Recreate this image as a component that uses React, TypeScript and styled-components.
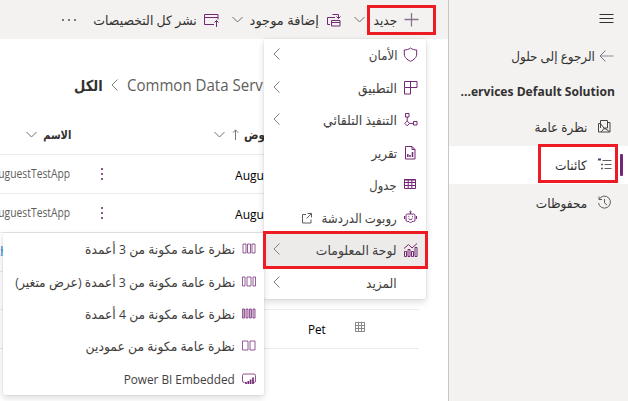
import React from "react";
import styled, { createGlobalStyle } from "styled-components";

const Global = createGlobalStyle`
  *, *::before, *::after { box-sizing: border-box; }
  body { margin: 0; }
`;

const ACCENT = "#742774";

const Page = styled.div`
  position: relative;
  display: flex;
  direction: rtl;
  width: 628px;
  height: 401px;
  overflow: hidden;
  background: #fff;
  color: #323130;
  font: 13px/20px "Open Sans", "DejaVu Sans", sans-serif;
`;

const Text = styled.span<{
  $scale?: number; $size?: number; $weight?: number; $color?: string; $up?: number; $ltr?: boolean; $origin?: string;
}>`
  display: block;
  flex: none;
  white-space: nowrap;
  direction: ${(p) => (p.$ltr ? "ltr" : "rtl")};
  font-size: ${(p) => p.$size ?? 13}px;
  font-weight: ${(p) => p.$weight ?? 400};
  color: ${(p) => p.$color ?? "inherit"};
  transform: translateY(${(p) => -(p.$up ?? 0)}px) scaleX(${(p) => p.$scale ?? 1});
  transform-origin: ${(p) => p.$origin ?? (p.$ltr ? "left" : "right")} center;
`;

const Svg = styled.svg<{ $color?: string }>`
  display: block;
  flex: none;
  fill: none;
  stroke: ${(p) => p.$color ?? ACCENT};
  stroke-width: 1;
  overflow: visible;
`;

/* ---------- icons ---------- */

const paths: Record<string, React.ReactNode> = {
  plus: <path d="M7.500 1v13.500M.5 7.500h14" stroke="#8a7392" strokeWidth="1.300" />,
  existing: <path d="M4 12.500H1.500v-7H9M5.500 8.500h8.500v5.500H5.500zM5.500 10.500H14M6.500 2.500h6v4M10.500 4.500l2 2 2-2" />,
  publish: <path d="M10 12.500H.5v-10h13.500v5M.5 5.500H14M12.500 15V8.500M10.500 10.500l2-2 2 2" />,
  shield: <path d="M7.500 1C5.800 2.300 3.600 3 1.300 3v4c0 3.400 2.600 5.700 6.200 7.300 3.600-1.600 6.200-3.900 6.200-7.300V3C11.400 3 9.200 2.300 7.500 1z" />,
  app: <path d="M1.500 1.500h12.500v6H1.500zM7.500 1.500v12.500h-6V7.500" />,
  flow: <path d="M2.500 1.500H6V5H2.500zM4.200 5v4M4.200 9l2.400 2.400-2.400 2.400-2.400-2.400zM6.600 11.400H10M10.500 9.500H14v3.500h-3.500z" />,
  report: <><path d="M2.500 1.500H9l3 3V14H2.500zM9 1.500v3h3" /><path d="M4.800 12V9M7 12v-2M9.500 12V7" strokeWidth="1.500" /></>,
  table: <><path d="M1.500 2.500h11v9h-11zM1.500 5.500h11M1.500 8.500h11M5.200 2.500v9M8.800 2.500v9" /><path d="M1 3h12" /></>,
  bot: <><path d="M3 5.500Q3 4 4.500 4h6Q12 4 12 5.500V10q0 1.500-1.500 1.500H9L7.500 13 6 11.500H4.500Q3 11.500 3 10zM7.500 4V2M1.500 6v3M13.500 6v3M5.500 8.800q2 1.800 4 0" /><circle cx="7.500" cy="1.800" r=".7" /><path d="M5.500 6.500h.8M9 6.500h.8" strokeWidth="1.400" /></>,
  dashboard: <><path d="M1.500 9.500h2v5h-2zM5 7.500h2v7H5zM8.500 9.500h2v5h-2zM12 5.500h2v9h-2z" /><path d="M1 6.500l4.500-4L9 6l5-4.500" /></>,
  col3: <path d="M2 3h3v9H2zM6.500 3h3v9h-3zM11 3h3v9h-3z" opacity=".75" />,
  col3v: <path d="M1.500 3h2.500v9H1.500zM6 3h4v9H6zM12 3h2.500v9H12z" opacity=".75" />,
  col4: <><path d="M1.500 3h2v9h-2zM5 3h2v9H5zM8.500 3h2v9h-2zM12 3h2v9h-2z" opacity=".75" /><path d="M2.500 3v9M6 3v9M9.500 3v9M13 3v9" opacity=".4" /></>,
  col2: <path d="M1.500 3H7v9H1.500zM9 3h5v9H9z" opacity=".75" />,
  powerbi: <><path d="M3.500 11.500H3q-1.500 0-1.500-1.500V4.500Q1.500 3 3 3h10q1.500 0 1.500 1.500V10q0 1.500-1.500 1.500" opacity=".8" /><path d="M5 13v-2M7.300 13v-3M9.600 13V8.500M12 13V6.500" strokeWidth="1.700" /></>,
  menu: <path d="M.5 2.500h14M.5 6.500h14M.5 10.500h14" stroke="#323130" />,
  back: <><path d="M14.500 7H1.200" stroke="#b3abb9" strokeWidth="1.500" /><path d="M6.500 1.500L1 7l5.500 5.500" stroke="#7d7086" /></>,
  overview: <path d="M1.500 4.500v8.500H13V3.500h-2.500M3.500 9V1.500h7V9M1.500 4.500h2l4.500 6M10.500 9h-3M4 13l3.500-4L13 13" stroke="#484644" />,
  objects: <><path d="M1 2.500h3" stroke="#494165" strokeWidth="2" /><path d="M5.500 3.500h9M7.500 7.500h7M7.500 11.500h7" stroke="#605e5c" /><path d="M4 7.500h2M4 11.500h2" stroke="#605e5c" strokeWidth="1.600" /></>,
  history: <path d="M2.200 4.200A6 6 0 1 1 1.500 8M2 1.500v3h3M7.500 4v4l2.500 2" stroke="#605e5c" />,
  external: <path d="M5 2.500H1.500V11H10V7.500M6.500 1.500h4v4M10.500 1.500l-5 5" stroke="#605e5c" />,
  sort: <path d="M3.500 11V1M.8 3.700L3.500 1l2.700 2.700" stroke="#7a7876" />,
  down: <path d="M.5 1l5 5 5-5" stroke="#73716f" />,
  left: <path d="M6.500 .5L1 6l5.500 5.500" stroke="#807e7c" />,
  grid: <path d="M.5 .5h9v9h-9zM.5 3.500h9M.5 6.500h9M3.500 .5v9M6.500 .5v9" stroke="#8a8886" />,
};

const Icon = ({ name, w = 16, h = 16 }: { name: string; w?: number; h?: number }) => (
  <Svg width={w} height={h} viewBox={`0 0 ${w} ${h}`}>{paths[name]}</Svg>
);
const Down = () => <Icon name="down" w={11} h={7} />;
const Left = () => <Icon name="left" w={7} h={12} />;

/* ---------- sidebar ---------- */

const Sidebar = styled.aside`
  flex: none;
  width: 180px;
  border-left: 1px solid #c8c6c4;
  background: #f3f2f1;
`;
const SideTop = styled.div`
  display: flex;
  height: 38px;
  padding: 12px 14px 0 0;
`;
const BackRow = styled.div`
  display: flex;
  align-items: center;
  gap: 4px;
  height: 36px;
  padding-right: 14px;
`;
const Title = styled.div`
  display: flex;
  justify-content: flex-end;
  align-items: center;
  direction: ltr;
  height: 34px;
  padding-right: 13px;
`;
const NavItem = styled.div<{ $selected?: boolean }>`
  position: relative;
  display: flex;
  align-items: center;
  gap: 10px;
  height: 38px;
  padding-right: 15px;
  background: ${(p) => (p.$selected ? "#fff" : "transparent")};
  &::after {
    content: "";
    display: ${(p) => (p.$selected ? "block" : "none")};
    position: absolute;
    right: 5px;
    top: 8px;
    width: 3px;
    height: 22px;
    border-radius: 1px;
    background: ${ACCENT};
  }
`;

/* ---------- main ---------- */

const Main = styled.main`
  flex: none;
  width: 448px;
`;
const Toolbar = styled.header`
  display: flex;
  align-items: center;
  height: 39px;
  padding-right: 28px;
  background: #f3f2f1;
`;
const Command = styled.div<{ $width: number; $after?: number }>`
  display: flex;
  align-items: center;
  flex: none;
  gap: 7px;
  width: ${(p) => p.$width}px;
  margin-left: ${(p) => p.$after ?? 0}px;
  & > svg:nth-of-type(2) {
    margin-right: auto;
  }
`;
const Dots = styled.div<{ $vertical?: boolean }>`
  display: flex;
  flex-direction: ${(p) => (p.$vertical ? "column" : "row")};
  gap: ${(p) => (p.$vertical ? 3 : 4)}px;
  & > i {
    width: 2px;
    height: 2px;
    background: ${(p) => (p.$vertical ? "#8a5590" : "#7a7876")};
  }
`;
const Crumbs = styled.div`
  display: flex;
  align-items: center;
  direction: ltr;
  height: 92px;
  margin-bottom: -16px;
  padding-left: 74px;
`;
const CrumbCell = styled.div<{ $width: number }>`
  flex: none;
  display: flex;
  width: ${(p) => p.$width}px;
`;
const Row = styled.div<{ $height?: number }>`
  display: grid;
  grid-template-columns: 70px 31px 12px 112px 14px 70px 46px 1fr;
  align-items: center;
  direction: ltr;
  width: 419px;
  margin-right: 29px;
  height: ${(p) => p.$height ?? 39}px;
  border-bottom: 1px solid #edebe9;
`;
const EndCell = styled.div`
  display: flex;
  justify-content: flex-end;
  align-items: center;
`;
const NameHead = styled.div`
  display: flex;
  justify-content: space-between;
  align-items: center;
  padding-left: 26px;
`;
const Cell = styled.div<{ $shift?: number; $up?: number }>`
  display: flex;
  align-items: center;
  min-width: 0;
  margin-left: ${(p) => p.$shift ?? 0}px;
  padding-bottom: ${(p) => p.$up ?? 0}px;
`;
const ClipCell = styled.div`
  width: 34px;
  margin-left: -4px;
  padding-top: 2px;
  overflow: hidden;
`;

/* ---------- menus ---------- */

const Menu = styled.div<{ $x: number; $y: number; $w: number; $h: number }>`
  position: absolute;
  left: ${(p) => p.$x}px;
  top: ${(p) => p.$y}px;
  width: ${(p) => p.$w}px;
  height: ${(p) => p.$h}px;
  display: grid;
  grid-auto-rows: 1fr;
  background: #fff;
  border-radius: 2px;
  color: #3f3e3d;
  box-shadow: 0 3px 7px rgba(0, 0, 0, .14), 0 0 2px rgba(0, 0, 0, .12);
`;
const MenuItem = styled.div<{ $active?: boolean }>`
  display: flex;
  align-items: center;
  padding: 0 7px 0 9px;
  background: ${(p) => (p.$active ? "#edebe9" : "transparent")};
`;
const IconSlot = styled.div`
  flex: none;
  width: 22px;
`;
const External = styled.div`
  flex: none;
  margin-right: 1px;
`;
const MoreSlot = styled.div`
  margin-right: auto;
  transform: translateY(-1px);
`;
const Marker = styled.div<{ $x: number; $y: number; $w: number; $h: number }>`
  position: absolute;
  left: ${(p) => p.$x}px;
  top: ${(p) => p.$y}px;
  width: ${(p) => p.$w}px;
  height: ${(p) => p.$h}px;
  border: 3px solid #ed1c24;
`;

type Item = { icon?: string; label: string; scale: number; more?: boolean; active?: boolean; external?: boolean };

const newItems: Item[] = [
  { icon: "shield", label: "الأمان", scale: 0.91, more: true },
  { icon: "app", label: "التطبيق", scale: 0.95, more: true },
  { icon: "flow", label: "التنفيذ التلقائي", scale: 0.96, more: true },
  { icon: "report", label: "تقرير", scale: 0.91 },
  { icon: "table", label: "جدول", scale: 0.89 },
  { icon: "bot", label: "روبوت الدردشة", scale: 0.91, external: true },
  { icon: "dashboard", label: "لوحة المعلومات", scale: 0.955, more: true, active: true },
  { label: "المزيد", scale: 0.94, more: true },
];

const dashboardItems: Item[] = [
  { icon: "col3", label: "نظرة عامة مكونة من 3 أعمدة", scale: 0.943 },
  { icon: "col3v", label: "نظرة عامة مكونة من 3 أعمدة (عرض متغير)", scale: 0.947 },
  { icon: "col4", label: "نظرة عامة مكونة من 4 أعمدة", scale: 0.943 },
  { icon: "col2", label: "نظرة عامة مكونة من عمودين", scale: 0.952 },
  { icon: "powerbi", label: "Power BI Embedded", scale: 0.905 },
];

const MenuRows = ({ items }: { items: Item[] }) => (
  <>
    {items.map((it) => (
      <MenuItem key={it.label} $active={it.active}>
        <IconSlot>{it.icon && <Icon name={it.icon} />}</IconSlot>
        <Text $scale={it.scale}>{it.label}</Text>
        {it.external && <External><Icon name="external" w={12} h={12} /></External>}
        {it.more && <MoreSlot><Left /></MoreSlot>}
      </MenuItem>
    ))}
  </>
);

const AppRow = () => (
  <Row>
    <EndCell><Text $size={12} $scale={0.86} $color="#605e5c">AuguestTestApp</Text></EndCell>
    <span />
    <Cell><Dots $vertical><i /><i /><i /></Dots></Cell>
    <span />
    <span />
    <ClipCell><Text $ltr $scale={0.93} $color="#000">AuguestTestApp</Text></ClipCell>
  </Row>
);

export default function App() {
  return (
    <Page>
      <Global />
      <Sidebar>
        <SideTop><Icon name="menu" w={15} h={14} /></SideTop>
        <BackRow><Icon name="back" w={15} h={14} /><Text $scale={0.92}>الرجوع إلى حلول</Text></BackRow>
        <Title><Text $ltr $origin="right" $weight={700} $scale={0.93}>...ervices Default Solution</Text></Title>
        <NavItem><Icon name="overview" /><Text $scale={0.92}>نظرة عامة</Text></NavItem>
        <NavItem $selected><Icon name="objects" /><Text $scale={0.94}>كائنات</Text></NavItem>
        <NavItem><Icon name="history" /><Text $scale={0.93}>محفوظات</Text></NavItem>
      </Sidebar>
      <Main>
        <Toolbar>
          <Command $width={64} $after={14}><Icon name="plus" /><Text $scale={0.94}>جديد</Text><Down /></Command>
          <Command $width={109} $after={14}><Icon name="existing" /><Text>إضافة موجود</Text><Down /></Command>
          <Command $width={143}><Icon name="publish" w={15} /><Text $scale={0.96}>نشر كل التخصيصات</Text></Command>
          <Dots><i /><i /><i /></Dots>
        </Toolbar>
        <Crumbs>
          <CrumbCell $width={37}><Text $weight={700} $size={15} $origin="left" $scale={0.87}>الكل</Text></CrumbCell>
          <CrumbCell $width={16}><Left /></CrumbCell>
          <Text $ltr $size={16} $scale={0.94} $color="#605e5c">Common Data Serv</Text>
        </Crumbs>
        <Row $height={40}>
          <NameHead><Down /><Text $weight={600} $size={12} $scale={0.82}>الاسم</Text></NameHead>
          <span /><span />
          <EndCell><Down /></EndCell>
          <EndCell><Icon name="sort" w={7} h={12} /></EndCell>
          <Cell $shift={5}><Text $weight={600} $size={12} $origin="left" $scale={0.9}>معروض</Text></Cell>
        </Row>
        <AppRow />
        <AppRow />
        <Row><Cell $shift={-4}><Text $ltr $size={12} $color="#0078d4">th</Text></Cell></Row>
        <Row $height={38} />
        <Row>
          <span /><span /><span /><span /><span /><span />
          <Cell $shift={-1}><Text $ltr $scale={0.9} $color="#000">Pet</Text></Cell>
          <Cell $up={5}><Icon name="grid" w={10} h={10} /></Cell>
        </Row>
      </Main>
      <Menu $x={264} $y={39} $w={162} $h={260}><MenuRows items={newItems} /></Menu>
      <Menu $x={3} $y={233} $w={261} $h={162}><MenuRows items={dashboardItems} /></Menu>
      <Marker $x={367} $y={5} $w={69} $h={30} />
      <Marker $x={263} $y={231} $w={165} $h={38} />
      <Marker $x={538} $y={144} $w={80} $h={39} />
    </Page>
  );
}
